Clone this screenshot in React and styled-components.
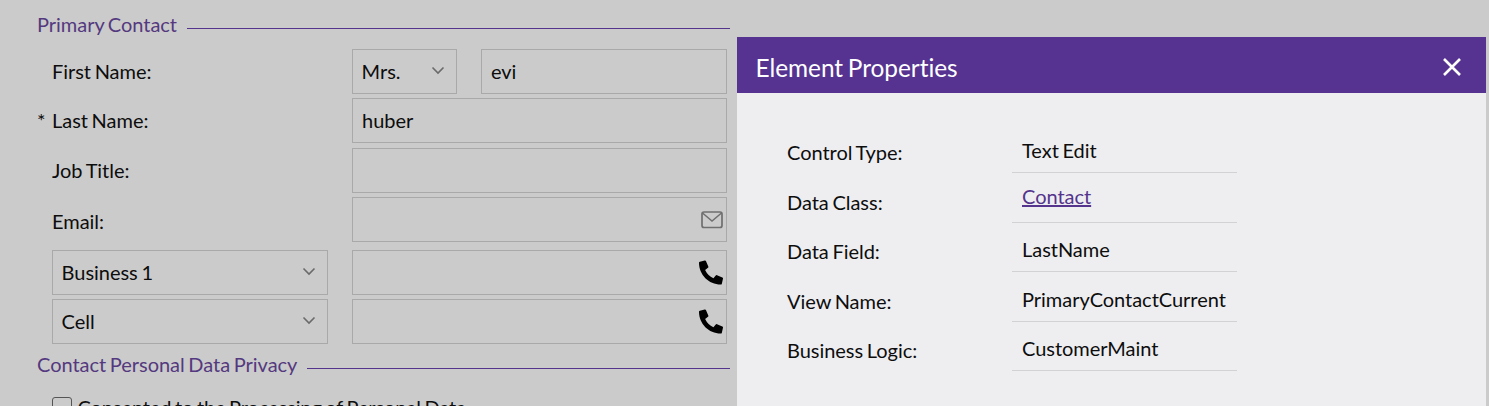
import React from "react";
import styled, { createGlobalStyle } from "styled-components";
import { FaPhoneAlt } from "react-icons/fa";

const GlobalStyle = createGlobalStyle`
    html, body {
        margin: 0;
        padding: 0;
        background: #cbcbcb;
    }
    body {
        font-family: "Lato", "Liberation Sans", sans-serif;
        font-size: 20px;
        font-variant-ligatures: none;
        word-spacing: -1.4px;
        letter-spacing: -0.03px;
        color: #0d0d0d;
    }
`;

const Page = styled.div`
    position: relative;
    width: 1489px;
    height: 406px;
    overflow: hidden;
    background: #cbcbcb;
`;

const Form = styled.div`
    width: 693px;
    margin-left: 37px;
    padding-top: 13px;
`;

const SectionTitle = styled.div`
    display: flex;
    align-items: center;
    box-sizing: border-box;
    height: 24px;
    padding-bottom: 2px;
    margin-top: ${(p) => p.$top || 0}px;
    color: #54397f;
    font-size: 20px;
    line-height: 22px;
    &::after {
        content: "";
        flex: 1;
        height: 1px;
        margin: ${(p) => p.$lineTop || 8}px 0 0 10px;
        background: #54348c;
    }
`;

const Row = styled.div`
    display: flex;
    height: 45px;
    margin-top: ${(p) => p.$top}px;
`;

const Marker = styled.div`
    width: 15px;
    line-height: 45px;
`;

const Label = styled.div`
    width: 276px;
    line-height: 45px;
    padding-top: ${(p) => p.$drop || 0}px;
`;

const Fields = styled.div`
    display: flex;
    gap: 24px;
    width: 375px;
    margin-left: 24px;
`;

const Field = styled.div`
    box-sizing: border-box;
    flex: ${(p) => (p.$width ? `0 0 ${p.$width}px` : "1 0 0")};
    display: flex;
    align-items: center;
    justify-content: space-between;
    height: 45px;
    padding: 0 3px 2px 9px;
    border: 1px solid #a9a9a9;
`;

const SelectField = styled(Field)`
    padding-right: 11px;
    padding-left: 8.6px;
`;

const CheckRow = styled.div`
    display: flex;
    align-items: center;
    gap: 5.500px;
    margin: 18px 0 0 15px;
    letter-spacing: -0.1px;
`;

const Checkbox = styled.span`
    box-sizing: border-box;
    width: 20px;
    height: 20px;
    border: 1px solid #555;
    border-radius: 3px;
`;

const Panel = styled.div`
    position: absolute;
    top: 37px;
    left: 737px;
    width: 749px;
    height: 369px;
    background: #eeeef1;
`;

const PanelHeader = styled.div`
    display: flex;
    align-items: center;
    justify-content: space-between;
    box-sizing: border-box;
    height: 56px;
    padding: 5px 24px 0 18.5px;
    background: #563391;
    color: #fff;
    font-size: 24.4px;
`;

const PropList = styled.div`
    display: grid;
    grid-template-columns: 225px 225px;
    grid-auto-rows: 49.5px;
    margin: 30.5px 0 0 50px;
`;

const PropLabel = styled.div`
    display: flex;
    align-items: flex-end;
    padding-bottom: 9px;
    box-sizing: border-box;
`;

const PropValue = styled.div`
    box-sizing: border-box;
    padding: ${(p) => (p.$link ? 6 : 9.5)}px 0 0 10px;
    line-height: 34px;
    border-bottom: 1px solid #d2d2d4;
    white-space: nowrap;
`;

const PropLink = styled.a`
    color: #54348c;
    text-decoration: underline;
`;

const Chevron = () => (
    <svg width="14" height="9" viewBox="0 0 14 9" fill="none">
        <path d="M1.500 1.500 7 7l5.500-5.500" stroke="#6a6a6a" strokeWidth="1.600" />
    </svg>
);

const MailIcon = styled.svg`
    margin-top: 3px;
`;

const CloseIcon = styled.svg`
    margin-top: -1px;
`;

const Phone = styled(FaPhoneAlt)`
    width: 24px;
    height: 25px;
    color: #000;
    margin-top: 2px;
`;

const properties = [
    ["Control Type:", "Text Edit"],
    ["Data Class:", "Contact", true],
    ["Data Field:", "LastName"],
    ["View Name:", "PrimaryContactCurrent"],
    ["Business Logic:", "CustomerMaint"],
];

function App() {
    return (
        <Page>
            <GlobalStyle />
            <Form>
                <SectionTitle>Primary Contact</SectionTitle>
                <Row $top={12}>
                    <Marker />
                    <Label>First Name:</Label>
                    <Fields>
                        <SelectField $width={105}>Mrs.<Chevron /></SelectField>
                        <Field>evi</Field>
                    </Fields>
                </Row>
                <Row $top={4}>
                    <Marker>*</Marker>
                    <Label>Last Name:</Label>
                    <Fields><Field>huber</Field></Fields>
                </Row>
                <Row $top={5}>
                    <Marker />
                    <Label>Job Title:</Label>
                    <Fields><Field /></Fields>
                </Row>
                <Row $top={4}>
                    <Marker />
                    <Label $drop={2}>Email:</Label>
                    <Fields>
                        <Field>
                            <span />
                            <MailIcon width="22" height="18" viewBox="0 0 22 18" fill="none">
                                <rect x="1" y="1" width="20" height="15.500" rx="2" stroke="#6f6f6f" strokeWidth="1.700" />
                                <path d="M1.500 2 11 10l9.500-8" stroke="#6f6f6f" strokeWidth="1.500" />
                            </MailIcon>
                        </Field>
                    </Fields>
                </Row>
                <Row $top={8}>
                    <Marker />
                    <SelectField $width={276}>Business 1<Chevron /></SelectField>
                    <Fields><Field><span /><Phone /></Field></Fields>
                </Row>
                <Row $top={4}>
                    <Marker />
                    <SelectField $width={276}>Cell<Chevron /></SelectField>
                    <Fields><Field><span /><Phone /></Field></Fields>
                </Row>
                <SectionTitle $top={9} $lineTop={8}>Contact Personal Data Privacy</SectionTitle>
                <CheckRow>
                    <Checkbox />
                    Consented to the Processing of Personal Data
                </CheckRow>
            </Form>
            <Panel>
                <PanelHeader>
                    Element Properties
                    <CloseIcon width="20" height="20" viewBox="0 0 20 20" fill="none">
                        <path d="M2 2l16 16M18 2 2 18" stroke="#fff" strokeWidth="2.600" />
                    </CloseIcon>
                </PanelHeader>
                <PropList>
                    {properties.map(([label, value, link]) => (
                        <React.Fragment key={label}>
                            <PropLabel>{label}</PropLabel>
                            <PropValue $link={link}>
                                {link ? <PropLink href="#">{value}</PropLink> : value}
                            </PropValue>
                        </React.Fragment>
                    ))}
                </PropList>
            </Panel>
        </Page>
    );
}

export default App;
